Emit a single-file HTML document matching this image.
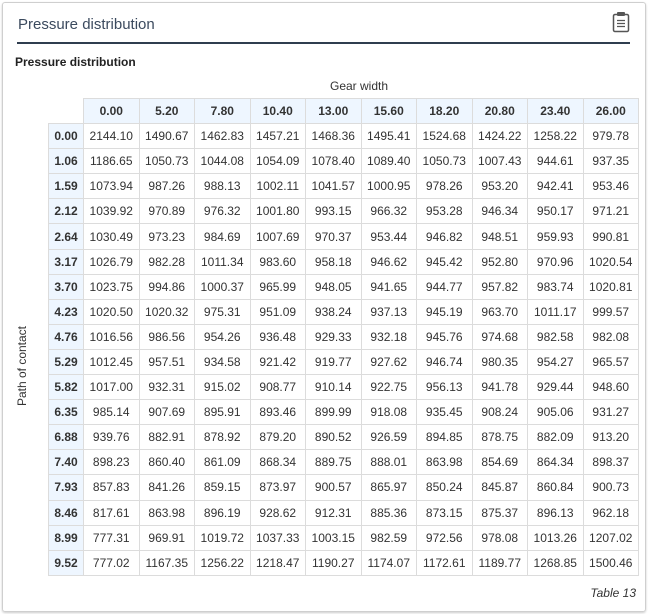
<!DOCTYPE html>
<html><head><style>
body{margin:0;background:#fff;font-family:"Liberation Sans",sans-serif;}
.card{position:absolute;left:2px;top:2px;width:642px;height:608px;border:1px solid #cfcfcf;border-radius:3px;box-shadow:0 1px 2px rgba(0,0,0,.2);}
.title{position:absolute;left:18px;top:16px;font-size:15px;color:#3b4a5e;}
.line{position:absolute;left:17px;top:42px;width:613px;height:2px;background:#2f3d4f;}
.sub{position:absolute;left:15px;top:55px;font-size:12px;font-weight:bold;color:#222;}
.gw{position:absolute;left:330px;top:79px;font-size:12px;color:#333;}
.poc{position:absolute;left:22px;top:366px;transform:translate(-50%,-50%) rotate(-90deg);font-size:12px;color:#333;white-space:nowrap;}
table{position:absolute;left:48px;top:98px;border-collapse:collapse;font-size:12px;color:#333;}
td{border:1px solid #dcdcdc;height:24.1px;padding:0;text-align:center;width:54.5px;}
td.h{background:#eef6ff;font-weight:bold;color:#333;}
td.r{background:#eef6ff;font-weight:bold;width:34px;color:#333;}
td.e{border:none;border-right:1px solid #dcdcdc;border-bottom:1px solid #dcdcdc;}
.foot{position:absolute;right:13px;top:586px;font-size:12px;font-style:italic;color:#333;}
</style></head><body>
<div class="card"></div>
<div class="title">Pressure distribution</div>
<svg style="position:absolute;left:612px;top:11px" width="18" height="22" viewBox="0 0 18 22"><rect x="1.5" y="3.5" width="15" height="17" rx="1.5" fill="none" stroke="#555" stroke-width="1.5"/><rect x="5" y="1" width="8" height="4" rx="1" fill="#555"/><path d="M5 9.5h8M5 12.5h8M5 15.5h8" stroke="#555" stroke-width="1.3"/></svg>
<div class="line"></div>
<div class="sub">Pressure distribution</div>
<div class="gw">Gear width</div>
<div class="poc">Path of contact</div>
<table>
<tr><td class="e r" style="background:none"></td><td class="h">0.00</td><td class="h">5.20</td><td class="h">7.80</td><td class="h">10.40</td><td class="h">13.00</td><td class="h">15.60</td><td class="h">18.20</td><td class="h">20.80</td><td class="h">23.40</td><td class="h">26.00</td></tr>
<tr><td class="r">0.00</td><td>2144.10</td><td>1490.67</td><td>1462.83</td><td>1457.21</td><td>1468.36</td><td>1495.41</td><td>1524.68</td><td>1424.22</td><td>1258.22</td><td>979.78</td></tr>
<tr><td class="r">1.06</td><td>1186.65</td><td>1050.73</td><td>1044.08</td><td>1054.09</td><td>1078.40</td><td>1089.40</td><td>1050.73</td><td>1007.43</td><td>944.61</td><td>937.35</td></tr>
<tr><td class="r">1.59</td><td>1073.94</td><td>987.26</td><td>988.13</td><td>1002.11</td><td>1041.57</td><td>1000.95</td><td>978.26</td><td>953.20</td><td>942.41</td><td>953.46</td></tr>
<tr><td class="r">2.12</td><td>1039.92</td><td>970.89</td><td>976.32</td><td>1001.80</td><td>993.15</td><td>966.32</td><td>953.28</td><td>946.34</td><td>950.17</td><td>971.21</td></tr>
<tr><td class="r">2.64</td><td>1030.49</td><td>973.23</td><td>984.69</td><td>1007.69</td><td>970.37</td><td>953.44</td><td>946.82</td><td>948.51</td><td>959.93</td><td>990.81</td></tr>
<tr><td class="r">3.17</td><td>1026.79</td><td>982.28</td><td>1011.34</td><td>983.60</td><td>958.18</td><td>946.62</td><td>945.42</td><td>952.80</td><td>970.96</td><td>1020.54</td></tr>
<tr><td class="r">3.70</td><td>1023.75</td><td>994.86</td><td>1000.37</td><td>965.99</td><td>948.05</td><td>941.65</td><td>944.77</td><td>957.82</td><td>983.74</td><td>1020.81</td></tr>
<tr><td class="r">4.23</td><td>1020.50</td><td>1020.32</td><td>975.31</td><td>951.09</td><td>938.24</td><td>937.13</td><td>945.19</td><td>963.70</td><td>1011.17</td><td>999.57</td></tr>
<tr><td class="r">4.76</td><td>1016.56</td><td>986.56</td><td>954.26</td><td>936.48</td><td>929.33</td><td>932.18</td><td>945.76</td><td>974.68</td><td>982.58</td><td>982.08</td></tr>
<tr><td class="r">5.29</td><td>1012.45</td><td>957.51</td><td>934.58</td><td>921.42</td><td>919.77</td><td>927.62</td><td>946.74</td><td>980.35</td><td>954.27</td><td>965.57</td></tr>
<tr><td class="r">5.82</td><td>1017.00</td><td>932.31</td><td>915.02</td><td>908.77</td><td>910.14</td><td>922.75</td><td>956.13</td><td>941.78</td><td>929.44</td><td>948.60</td></tr>
<tr><td class="r">6.35</td><td>985.14</td><td>907.69</td><td>895.91</td><td>893.46</td><td>899.99</td><td>918.08</td><td>935.45</td><td>908.24</td><td>905.06</td><td>931.27</td></tr>
<tr><td class="r">6.88</td><td>939.76</td><td>882.91</td><td>878.92</td><td>879.20</td><td>890.52</td><td>926.59</td><td>894.85</td><td>878.75</td><td>882.09</td><td>913.20</td></tr>
<tr><td class="r">7.40</td><td>898.23</td><td>860.40</td><td>861.09</td><td>868.34</td><td>889.75</td><td>888.01</td><td>863.98</td><td>854.69</td><td>864.34</td><td>898.37</td></tr>
<tr><td class="r">7.93</td><td>857.83</td><td>841.26</td><td>859.15</td><td>873.97</td><td>900.57</td><td>865.97</td><td>850.24</td><td>845.87</td><td>860.84</td><td>900.73</td></tr>
<tr><td class="r">8.46</td><td>817.61</td><td>863.98</td><td>896.19</td><td>928.62</td><td>912.31</td><td>885.36</td><td>873.15</td><td>875.37</td><td>896.13</td><td>962.18</td></tr>
<tr><td class="r">8.99</td><td>777.31</td><td>969.91</td><td>1019.72</td><td>1037.33</td><td>1003.15</td><td>982.59</td><td>972.56</td><td>978.08</td><td>1013.26</td><td>1207.02</td></tr>
<tr><td class="r">9.52</td><td>777.02</td><td>1167.35</td><td>1256.22</td><td>1218.47</td><td>1190.27</td><td>1174.07</td><td>1172.61</td><td>1189.77</td><td>1268.85</td><td>1500.46</td></tr>
</table>
<div class="foot">Table 13</div>
</body></html>
